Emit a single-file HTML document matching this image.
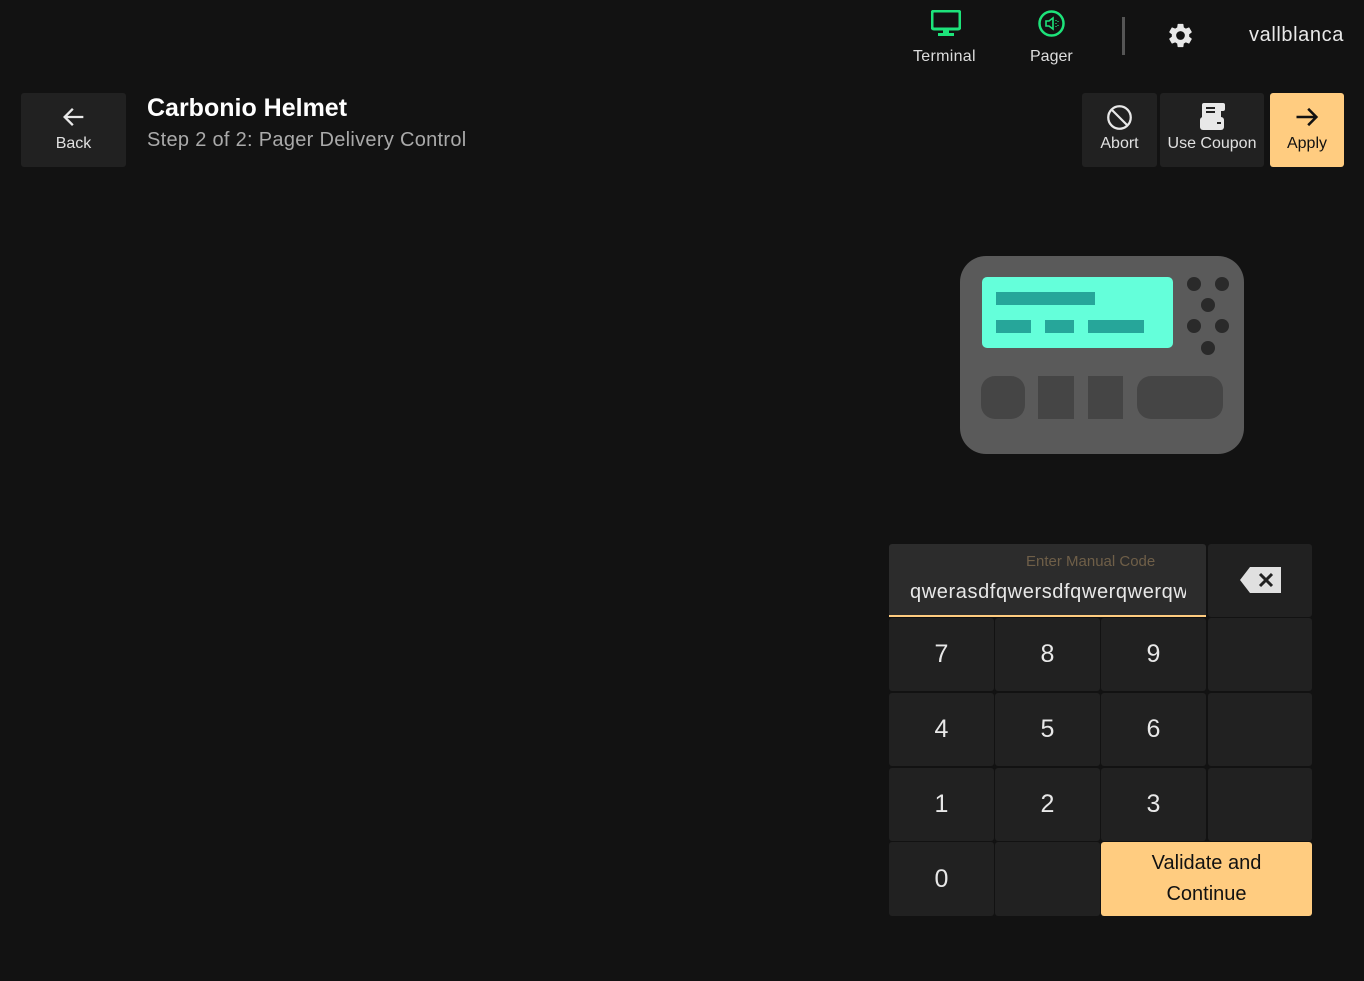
<!DOCTYPE html>
<html><head><style>
*{box-sizing:border-box;margin:0;padding:0}
body{width:1364px;height:981px;background:#121212;font-family:"Liberation Sans",sans-serif;color:#e0e0e0;position:relative;overflow:hidden}
.a{position:absolute}
.btn{position:absolute;background:#212121;border-radius:3px;color:#e0e0e0;font-size:16px;text-align:center}
.k{position:absolute;background:#212121;border-radius:3px;color:#e8e8e8;font-size:25px;display:flex;align-items:center;justify-content:center}
</style></head><body>
<svg class="a" style="left:931px;top:10px" width="30" height="28" viewBox="0 0 30 28"><rect x="1" y="1" width="28" height="18" rx="2" fill="none" stroke="#1de37a" stroke-width="3"/><rect x="12" y="19" width="6" height="5" fill="#1de37a"/><rect x="7" y="23" width="16" height="3" fill="#1de37a"/></svg>
<div class="a" style="left:913px;top:48px;font-size:16px;color:#ddd;letter-spacing:0.3px">Terminal</div>
<svg class="a" style="left:1038px;top:10px" width="27" height="27" viewBox="0 0 27 27"><circle cx="13.5" cy="13.5" r="12" fill="none" stroke="#1de37a" stroke-width="2.5"/><path d="M8 11h3l4-3v11l-4-3H8z" fill="none" stroke="#1de37a" stroke-width="1.6"/><path d="M18 10v1M18 13v1M18 16v1M20 11v1M20 15v1" stroke="#1de37a" stroke-width="1.2"/></svg>
<div class="a" style="left:1030px;top:48px;font-size:16px;color:#ddd">Pager</div>
<div class="a" style="left:1122px;top:17px;width:3px;height:38px;background:#555"></div>
<svg class="a" style="left:1166px;top:21px" width="29" height="29" viewBox="0 0 24 24"><path fill="#e8e8e8" d="M19.14 12.94c.04-.3.06-.61.06-.94s-.02-.64-.07-.94l2.03-1.58a.49.49 0 0 0 .12-.61l-1.92-3.32a.49.49 0 0 0-.59-.22l-2.39.96c-.5-.38-1.030-.7-1.62-.94l-.36-2.54a.48.48 0 0 0-.48-.41h-3.84c-.24 0-.43.17-.47.41l-.36 2.54c-.59.24-1.13.57-1.62.94l-2.39-.96a.48.48 0 0 0-.59.22L2.74 8.87c-.12.21-.08.47.12.61l2.03 1.58c-.05.3-.09.63-.09.94s.02.64.07.94l-2.03 1.58a.49.49 0 0 0-.12.61l1.92 3.32c.12.22.37.29.59.22l2.39-.96c.5.38 1.03.7 1.62.94l.36 2.54c.05.24.24.41.48.41h3.84c.24 0 .44-.17.47-.41l.36-2.54c.59-.24 1.13-.56 1.62-.94l2.39.96c.22.08.47 0 .59-.22l1.92-3.32c.12-.22.07-.47-.12-.61l-2.01-1.58zM12 15.6A3.6 3.6 0 1 1 12 8.4a3.6 3.6 0 0 1 0 7.2z"/></svg>
<div class="a" style="left:1249px;top:24px;font-size:20px;color:#e8e8e8;letter-spacing:0.6px">vallblanca</div>

<div class="btn" style="left:21px;top:93px;width:105px;height:74px">
<svg style="position:absolute;left:39px;top:10px" width="28" height="28" viewBox="0 0 24 24"><path d="M20 12H5M11 5l-7 7 7 7" fill="none" stroke="#e8e8e8" stroke-width="2"/></svg>
<div style="position:absolute;top:42px;width:100%">Back</div></div>
<div class="a" style="left:147px;top:94px;font-size:25px;font-weight:bold;color:#fff">Carbonio Helmet</div>
<div class="a" style="left:147px;top:129px;font-size:20px;color:#aaa;letter-spacing:0.3px">Step 2 of 2: Pager Delivery Control</div>

<div class="btn" style="left:1082px;top:93px;width:75px;height:74px">
<svg style="position:absolute;left:24px;top:11px" width="27" height="27" viewBox="0 0 24 24"><circle cx="12" cy="12" r="10" fill="none" stroke="#e8e8e8" stroke-width="2"/><path d="M5 5l14 14" stroke="#e8e8e8" stroke-width="2"/></svg>
<div style="position:absolute;top:42px;width:100%">Abort</div></div>
<div class="btn" style="left:1160px;top:93px;width:104px;height:74px">
<svg style="position:absolute;left:39px;top:9px" width="27" height="30" viewBox="0 0 27 30"><rect x="3" y="1" width="19" height="16" rx="2" fill="#e8e8e8"/><rect x="19" y="1" width="7" height="8" rx="2" fill="#e8e8e8"/><path d="M7 6h9M7 10h9" stroke="#212121" stroke-width="2"/><rect x="1" y="15" width="24" height="13" rx="3" fill="#e8e8e8"/><rect x="18" y="20" width="4" height="2" fill="#212121"/></svg>
<div style="position:absolute;top:42px;width:100%">Use Coupon</div></div>
<div class="btn" style="left:1270px;top:93px;width:74px;height:74px;background:#ffcc80;color:#111">
<svg style="position:absolute;left:22px;top:10px" width="30" height="28" viewBox="0 0 24 24"><path d="M3 12h17M13 5l7 7-7 7" fill="none" stroke="#111" stroke-width="2.2"/></svg>
<div style="position:absolute;top:42px;width:100%">Apply</div></div>

<svg class="a" style="left:960px;top:256px" width="284" height="198" viewBox="0 0 284 198">
<rect width="284" height="198" rx="26" fill="#5a5a5a"/>
<rect x="22" y="21" width="191" height="71" rx="5" fill="#64ffda"/>
<rect x="36" y="36" width="99" height="13" fill="#26a69a"/>
<rect x="36" y="64" width="35" height="13" fill="#26a69a"/>
<rect x="85" y="64" width="29" height="13" fill="#26a69a"/>
<rect x="128" y="64" width="56" height="13" fill="#26a69a"/>
<g fill="#2a2a2a"><circle cx="234" cy="28" r="7"/><circle cx="262" cy="28" r="7"/><circle cx="248" cy="49" r="7"/><circle cx="234" cy="70" r="7"/><circle cx="262" cy="70" r="7"/><circle cx="248" cy="92" r="7"/></g>
<g fill="#454545"><rect x="21" y="120" width="44" height="43" rx="14"/><rect x="78" y="120" width="36" height="43"/><rect x="128" y="120" width="35" height="43"/><rect x="177" y="120" width="86" height="43" rx="14"/></g>
</svg>

<div class="a" style="left:889px;top:544px;width:317px;height:73px;background:#2c2c2c;border-radius:3px 3px 0 0;border-bottom:2px solid #ffcc80;overflow:hidden">
<div style="position:absolute;left:137px;top:9px;font-size:15px;color:#6f5f48">Enter Manual Code</div>
<div style="position:absolute;left:21px;top:37px;width:276px;font-size:20px;color:#e8e8e8;white-space:nowrap;overflow:hidden;letter-spacing:0.6px">qwerasdfqwersdfqwerqwerqwer</div>
</div>
<div class="k" style="left:1208px;top:544px;width:104px;height:73px">
<svg width="44" height="28" viewBox="0 0 44 28" style="margin-top:-0px;position:absolute;left:31px;top:22px"><path d="M11 1h31v26H11L1 14z" fill="#e0e0e0"/><path d="M21 8l12 12M33 8L21 20" stroke="#212121" stroke-width="3"/></svg></div>

<div class="k" style="left:889px;top:618px;width:105px;height:73px">7</div>
<div class="k" style="left:995px;top:618px;width:105px;height:73px">8</div>
<div class="k" style="left:1101px;top:618px;width:105px;height:73px">9</div>
<div class="k" style="left:1208px;top:618px;width:104px;height:73px"></div>
<div class="k" style="left:889px;top:693px;width:105px;height:73px">4</div>
<div class="k" style="left:995px;top:693px;width:105px;height:73px">5</div>
<div class="k" style="left:1101px;top:693px;width:105px;height:73px">6</div>
<div class="k" style="left:1208px;top:693px;width:104px;height:73px"></div>
<div class="k" style="left:889px;top:768px;width:105px;height:73px">1</div>
<div class="k" style="left:995px;top:768px;width:105px;height:73px">2</div>
<div class="k" style="left:1101px;top:768px;width:105px;height:73px">3</div>
<div class="k" style="left:1208px;top:768px;width:104px;height:73px"></div>
<div class="k" style="left:889px;top:842px;width:105px;height:74px">0</div>
<div class="k" style="left:995px;top:842px;width:105px;height:74px"></div>
<div class="k" style="left:1101px;top:842px;width:211px;height:74px;background:#ffcc80;color:#111;font-size:20px;line-height:31px;text-align:center">Validate and<br>Continue</div>
</body></html>
